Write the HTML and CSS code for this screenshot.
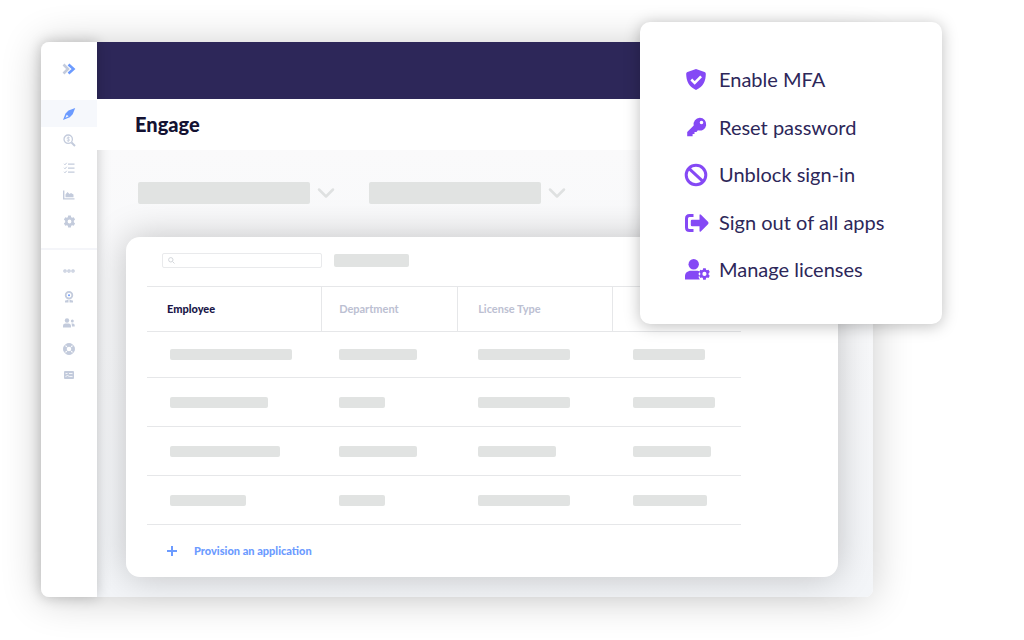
FILE: index.html
```
<!DOCTYPE html>
<html lang="en">
<head>
  <meta charset="UTF-8" />
  <meta name="viewport" content="width=device-width, initial-scale=1.0" />
  <title>Engage</title>
  <link rel="stylesheet" href="styles.css">
</head>
<body>
  <div class="app">
    <!-- Sidebar -->
    <nav class="sidebar" aria-label="Main">
      <button class="expand" type="button" aria-label="Expand menu">
        <svg width="14" height="12" viewBox="0 0 14 12" fill="none" stroke-width="2.6"><path d="M1.5 1.5 6 6 1.5 10.5" stroke="#c3cbdc"/><path d="M6.5 1.5 11.500 6 6.5 10.5" stroke="#6c9bff"/></svg>
      </button>
      <div class="nav-group">
        <a class="nav-item active" href="#" aria-label="Engage">
          <svg width="14" height="14" viewBox="0 0 14 14"><path fill="#6c9bff" fill-rule="evenodd" d="M13.200 1 6.500 3.400 3.500 6.400 1 13 7.800 10.300 10.700 7.200ZM4.700 7.700 6.600 9.300 3.500 10.700Z"/></svg>
        </a>
        <a class="nav-item" href="#" aria-label="Insights">
          <svg width="13" height="13" viewBox="0 0 13 13" fill="none" stroke="currentColor"><circle cx="5.2" cy="5.2" r="4.2" stroke-width="1.3"/><path d="m8.500 8.500 3.500 3.500" stroke-width="2"/><path d="M6.700 3.800c-1-.8-2.800-.5-2.600.5.200.9 2.500.7 2.500 1.700 0 1-1.700 1.200-2.800.4M5.300 2.500v5.400" stroke-width=".8"/></svg>
        </a>
        <a class="nav-item" href="#" aria-label="Tasks">
          <svg width="12" height="12" viewBox="0 0 12 12" fill="none" stroke="currentColor"><path d="M5 2.200h6.500M5 6.200h6.500M5 10.200h6.500" stroke-width="1.2"/><path d="m1 1.800 1 1 1.700-2M1 5.800l1 1 1.700-2M1 9.800l1 1 1.700-2"/></svg>
        </a>
        <a class="nav-item" href="#" aria-label="Reports">
          <svg width="12" height="10" viewBox="0 0 12 10"><path d="M0 .5h1.400v7.700H11.500v1.300H0Z" fill="currentColor"/><path d="M2.500 7.200V4.500L4.500 2l2 2L8 3l2.500 1.500v2.700Z" fill="currentColor"/></svg>
        </a>
        <a class="nav-item" href="#" aria-label="Settings">
          <svg width="13" height="13" viewBox="0 0 24 24"><path fill="currentColor" fill-rule="evenodd" d="m9.500 1-.6 3-1.700 1-3-1-2.500 4.300L4 10.500v3L1.700 15.700 4.200 20l3-1 1.700 1 .6 3h5l.6-3 1.700-1 3 1 2.500-4.300-2.300-2.200v-3l2.300-2.200L19.800 4l-3 1-1.700-1-.6-3ZM12 8.500a3.500 3.500 0 1 1 0 7 3.500 3.500 0 0 1 0-7Z"/></svg>
        </a>
      </div>
      <div class="nav-group secondary">
        <a class="nav-item" href="#" aria-label="More">
          <svg width="12" height="4" viewBox="0 0 12 4" fill="none" stroke="currentColor" stroke-width="1.2"><circle cx="2" cy="2" r="1.2"/><circle cx="6" cy="2" r="1.2"/><circle cx="10" cy="2" r="1.2"/></svg>
        </a>
        <a class="nav-item" href="#" aria-label="Awards">
          <svg width="10" height="12" viewBox="0 0 10 12" fill="none" stroke="currentColor"><circle cx="5" cy="4.2" r="3.3" stroke-width="1.800"/><circle cx="5" cy="4.2" r="1" fill="#6c9bff" stroke="none"/><path d="M1 10.500h2.500v-1.500M9 10.500H6.500v-1.500" stroke-width="2"/></svg>
        </a>
        <a class="nav-item" href="#" aria-label="Users">
          <svg width="12" height="10" viewBox="0 0 12 10" fill="currentColor"><circle cx="4" cy="2.5" r="2.2"/><path d="M0 9.500V8c0-1.700 1-2.500 2.500-2.500h3C7 5.500 8 6.500 8 8v1.500Z"/><circle cx="9.3" cy="3" r="1.5"/><path d="M8.300 5.500h1.500c1.200 0 1.900.8 1.900 2v1H9c0-1.500-.2-2.200-.7-3Z"/></svg>
        </a>
        <a class="nav-item" href="#" aria-label="Support">
          <svg width="12" height="12" viewBox="0 0 12 12" fill="none"><circle cx="6" cy="6" r="4" stroke="currentColor" stroke-width="3.4"/><path d="m1.800 1.800 2 2M10.200 1.800l-2 2M1.800 10.200l2-2M10.200 10.200l-2-2" stroke="#fff" stroke-width="1.2"/><circle cx="6" cy="6" r="5.4" stroke="currentColor"/></svg>
        </a>
        <a class="nav-item" href="#" aria-label="Accounts">
          <svg width="10" height="8" viewBox="0 0 10 8"><rect width="10" height="8" rx="1" fill="currentColor"/><path d="M1.500 2.500h2M5 2.500h3.500M1.500 5.500l2-1 2 1h3" stroke="#fff" stroke-width=".8" fill="none"/></svg>
        </a>
      </div>
    </nav>

    <!-- Main area -->
    <main class="main">
      <div class="topbar"></div>
      <header class="title-bar">
        <h1>Engage</h1>
      </header>

      <div class="content">
        <div class="filters">
          <button class="filter" type="button" aria-label="First filter">
            <span class="filter-value"></span>
            <svg width="18" height="12" viewBox="0 0 18 12" fill="none" stroke="#dfe1e1" stroke-width="2.5" stroke-linecap="round" stroke-linejoin="round"><path d="m2 2.500 7 7 7-7"/></svg>
          </button>
          <button class="filter" type="button" aria-label="Second filter">
            <span class="filter-value"></span>
            <svg width="18" height="12" viewBox="0 0 18 12" fill="none" stroke="#dfe1e1" stroke-width="2.5" stroke-linecap="round" stroke-linejoin="round"><path d="m2 2.500 7 7 7-7"/></svg>
          </button>
        </div>

        <section class="card">
          <div class="tools">
            <label class="search">
              <svg width="7" height="7" viewBox="0 0 7 7" fill="none" stroke="#d3d6da"><circle cx="2.8" cy="2.8" r="2.2"/><path d="m4.500 4.500 2 2"/></svg>
              <input type="search" aria-label="Search employees">
            </label>
            <span class="tool-bar"></span>
          </div>

          <table class="licenses">
            <thead>
              <tr>
                <th class="col-employee" scope="col">Employee</th>
                <th class="col-department" scope="col">Department</th>
                <th class="col-license" scope="col">License Type</th>
                <td></td>
              </tr>
            </thead>
            <tbody>
              <tr>
                <td><span class="bar" style="width: 122px"></span></td>
                <td><span class="bar" style="width: 78px"></span></td>
                <td><span class="bar" style="width: 92px"></span></td>
                <td><span class="bar" style="width: 72px"></span></td>
              </tr>
              <tr>
                <td><span class="bar" style="width: 98px"></span></td>
                <td><span class="bar" style="width: 46px"></span></td>
                <td><span class="bar" style="width: 92px"></span></td>
                <td><span class="bar" style="width: 82px"></span></td>
              </tr>
              <tr>
                <td><span class="bar" style="width: 110px"></span></td>
                <td><span class="bar" style="width: 78px"></span></td>
                <td><span class="bar" style="width: 78px"></span></td>
                <td><span class="bar" style="width: 78px"></span></td>
              </tr>
              <tr>
                <td><span class="bar" style="width: 76px"></span></td>
                <td><span class="bar" style="width: 46px"></span></td>
                <td><span class="bar" style="width: 92px"></span></td>
                <td><span class="bar" style="width: 74px"></span></td>
              </tr>
            </tbody>
          </table>

          <a class="provision" href="#">
            <svg width="10" height="10" viewBox="0 0 10 10" stroke="#6c9bff" stroke-width="2"><path d="M5 0v10M0 5h10"/></svg>
            Provision an application
          </a>
        </section>
      </div>
    </main>

    <!-- Quick actions menu -->
    <div class="actions">
      <button class="action" type="button">
        <svg width="26" height="24" viewBox="0 0 26 24"><path d="M12 1 3.500 4C2.700 4.300 2.200 5 2.200 5.800 2.200 13 4.500 18.500 12 22c7.500-3.500 9.800-9 9.800-16.200 0-.8-.5-1.500-1.300-1.800Z" fill="currentColor"/><path d="m7.300 11.500 3.400 3.400 6.400-6.600" fill="none" stroke="#fff" stroke-width="2.5"/></svg>
        <span>Enable MFA</span>
      </button>
      <button class="action" type="button">
        <svg width="26" height="24" viewBox="0 0 26 24"><path fill="currentColor" fill-rule="evenodd" d="M15.800 1.800a6.400 6.400 0 1 1-1.900 12.500L12.500 16h-2v2H8.600v2.200H3.200v-4.100l6.500-6.500a6.400 6.400 0 0 1 6.100-7.800ZM17.500 4.700a1.800 1.800 0 1 0 0 3.600 1.800 1.800 0 0 0 0-3.600Z"/></svg>
        <span>Reset password</span>
      </button>
      <button class="action" type="button">
        <svg width="26" height="24" viewBox="0 0 26 24" fill="none" stroke="currentColor" stroke-width="3"><circle cx="12" cy="12" r="9.800"/><path d="m5.100 5.600 13.800 12.800"/></svg>
        <span>Unblock sign-in</span>
      </button>
      <button class="action" type="button">
        <svg width="26" height="24" viewBox="0 0 26 24"><path d="M9.500 4.500H5.500Q2.500 4.500 2.500 7.500v9q0 3 3 3H9.500" fill="none" stroke="currentColor" stroke-width="3"/><path d="M8 8.800h7.500V4.500q0-2 1.500-.7l7 7q1.200 1.200 0 2.400l-7 7q-1.500 1.300-1.500-.7v-4.300H8q-1.200 0-1.200-1.200v-4q0-1.200 1.200-1.200Z" fill="currentColor"/></svg>
        <span>Sign out of all apps</span>
      </button>
      <button class="action" type="button">
        <svg width="26" height="24" viewBox="0 0 26 24" fill="currentColor"><circle cx="9.7" cy="6.3" r="5.2"/><path d="M1 21.500v-3c0-3.500 2.500-5.700 6-5.700h5.500c1.500 0 2.500.2 3.200.8l-1.300 2.400 1 1.500-.9 1.600 1.300 2.400Z"/><g transform="translate(14.200 9.700) scale(.52)"><path fill-rule="evenodd" d="m9.500 1-.6 3-1.700 1-3-1-2.500 4.300L4 10.500v3L1.700 15.700 4.200 20l3-1 1.700 1 .6 3h5l.6-3 1.700-1 3 1 2.500-4.300-2.300-2.200v-3l2.300-2.200L19.800 4l-3 1-1.700-1-.6-3ZM12 8a4 4 0 1 1 0 8 4 4 0 0 1 0-8Z"/></g></svg>
        <span>Manage licenses</span>
      </button>
    </div>
  </div>
</body>
</html>
```
FILE: styles.css
```
* {
  margin: 0;
  padding: 0;
  box-sizing: border-box;
}

body {
  min-height: 100vh;
  padding: 42px 151px 43px 41px;
  background: #fff;
  color: #2d2759;
  font-family: Lato, "Open Sans", sans-serif;
}

button {
  border: none;
  background: none;
  color: inherit;
  font: inherit;
  cursor: pointer;
}

a {
  text-decoration: none;
}

svg {
  display: block;
  flex: none;
}

.app {
  position: relative;
  display: flex;
  border-radius: 8px;
  box-shadow: 0 2px 40px rgba(0, 0, 0, 0.2);
}

/* Sidebar */
.sidebar {
  position: relative;
  z-index: 1;
  flex: none;
  width: 56px;
  background: #fff;
  border-radius: 8px 0 0 8px;
  box-shadow: 0 0 14px rgba(0, 0, 0, 0.22);
}

.expand {
  display: flex;
  align-items: center;
  justify-content: center;
  width: 100%;
  height: 58px;
  padding-bottom: 4px;
}

.secondary {
  margin-top: 13px;
  padding-top: 8px;
  border-top: 2px solid #f4f5f9;
}

.nav-item {
  display: flex;
  align-items: center;
  justify-content: center;
  height: 27px;
  color: #c3cbdc;
}

.secondary .nav-item {
  height: 26px;
}

.nav-item.active {
  background: #f6f8fc;
}

/* Main area */
.main {
  flex: 1;
  min-width: 0;
}

.topbar {
  height: 57px;
  background: #2d2759;
  border-radius: 0 8px 0 0;
}

.title-bar {
  position: relative;
  z-index: 2;
  padding: 13px 38px 14px;
  background: #fff;
}

h1 {
  color: #141232;
  font-size: 20px;
  font-weight: 900;
  line-height: 24px;
}

.content {
  padding: 32px 35px 20px 29px;
  background: linear-gradient(#fafafb, #f3f5f8);
  border-radius: 0 0 8px 0;
}

.filters {
  display: flex;
  gap: 34px;
  padding: 0 12px 33px;
}

.filter {
  display: flex;
  align-items: center;
  gap: 7px;
}

.filter-value {
  width: 172px;
  height: 22px;
  background: #e1e3e2;
  border-radius: 2px;
}

/* Card */
.card {
  padding: 16px 97px 16px 21px;
  background: #fff;
  border-radius: 14px;
  box-shadow: 0 0 36px rgba(0, 0, 0, 0.22);
}

.tools {
  display: flex;
  align-items: center;
  gap: 12px;
  padding: 0 15px 18px;
}

.search {
  display: flex;
  align-items: center;
  gap: 4px;
  width: 160px;
  height: 15px;
  padding: 0 5px;
  border: 1px solid #e9eaec;
  border-radius: 2px;
}

.search input {
  flex: 1;
  min-width: 0;
  height: 13px;
  border: none;
  outline: none;
  background: none;
  font-size: 10px;
}

.tool-bar {
  width: 75px;
  height: 13px;
  background: #e1e3e2;
  border-radius: 2px;
}

.licenses {
  width: 100%;
  border-collapse: collapse;
  table-layout: fixed;
}

.licenses tr {
  height: 49px;
  border-bottom: 1px solid #e6e7e9;
}

.licenses thead tr {
  height: 45px;
  border-top: 1px solid #e6e7e9;
}

.licenses tbody tr:first-child {
  height: 46px;
}

.licenses th {
  padding-left: 20px;
  border-right: 1px solid #e6e7e9;
  color: #bcc0d2;
  font-size: 11px;
  font-weight: 700;
  line-height: 16px;
  text-align: left;
}

.licenses .col-employee {
  width: 29.4%;
  color: #1a1648;
  font-weight: 900;
}

.licenses .col-department {
  width: 22.9%;
  padding-left: 17px;
}

.licenses .col-license {
  width: 26.1%;
}

.licenses td {
  padding-left: 20px;
}

.licenses td:first-child {
  padding-left: 23px;
}

.licenses td:nth-child(2) {
  padding-left: 17px;
}

.bar {
  display: block;
  height: 11px;
  background: #e1e3e2;
  border-radius: 2px;
}

.provision {
  display: inline-flex;
  align-items: center;
  gap: 17px;
  padding: 17px 20px 1px;
  color: #6c9bff;
  font-size: 11px;
  font-weight: 900;
  line-height: 18px;
}

/* Quick actions menu */
.actions {
  position: absolute;
  top: -20px;
  right: -69px;
  z-index: 3;
  display: flex;
  flex-direction: column;
  justify-content: space-between;
  width: 302px;
  min-height: 302px;
  padding: 46px 44px 42px;
  background: #fff;
  border-radius: 10px;
  box-shadow: 0 2px 16px rgba(0, 0, 0, 0.26);
}

.action {
  display: flex;
  align-items: center;
  gap: 9px;
  font-size: 20px;
  line-height: 24px;
  white-space: nowrap;
}

.action span {
  padding-bottom: 2px;
  line-height: 22px;
}

.action svg {
  color: #8549f5;
}
```
